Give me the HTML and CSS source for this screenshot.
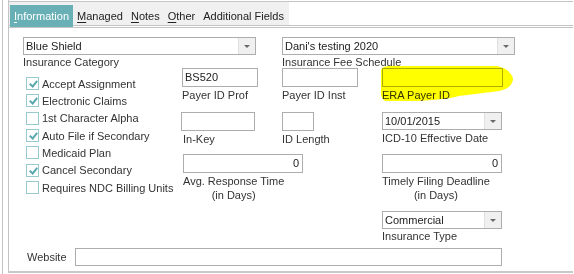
FILE: index.html
```html
<!DOCTYPE html>
<html>
<head>
	<meta name="viewport" content="width=device-width, initial-scale=1.0">
	<link rel="stylesheet" href="styles.css">
</head>
<body>
	<div class="frame">
		<div class="page">
			<!-- tab strip -->
			<div class="tabs">
				<div class="strip">
					<span class="tab active"><u>I</u>nformation</span>
					<span class="tab"><u>M</u>anaged</span>
					<span class="tab"><u>N</u>otes</span>
					<span class="tab"><u>O</u>ther</span>
					<span class="tab">Additional Fields</span>
				</div>
			</div>

			<div class="panel">
				<div class="form">
					<div class="field category">
						<div class="combo wide"><span class="value">Blue Shield</span><span class="drop"></span></div>
						<div class="label top">Insurance Category</div>
					</div>
					<div class="field schedule">
						<div class="combo wide"><span class="value">Dani's testing 2020</span><span class="drop"></span></div>
						<div class="label top">Insurance Fee Schedule</div>
					</div>

					<div class="checks">
						<label class="check"><span class="box on"></span>Accept Assignment</label>
						<label class="check"><span class="box on"></span>Electronic Claims</label>
						<label class="check"><span class="box"></span>1st Character Alpha</label>
						<label class="check"><span class="box on"></span>Auto File if Secondary</label>
						<label class="check"><span class="box"></span>Medicaid Plan</label>
						<label class="check"><span class="box on"></span>Cancel Secondary</label>
						<label class="check"><span class="box"></span>Requires NDC Billing Units</label>
					</div>

					<div class="field prof">
						<div class="input w76">BS520</div>
						<div class="label">Payer ID Prof</div>
					</div>
					<div class="field inst">
						<div class="input w76"></div>
						<div class="label">Payer ID Inst</div>
					</div>
					<div class="field era">
						<div class="input w121"></div>
						<div class="label">ERA Payer ID</div>
						<svg class="marker" width="140" height="42" viewBox="0 0 140 42">
							<path d="M2,6 Q3,1 20,2 L118,2 Q131,5 134,14 Q134,24 120,27 L80,32 Q62,37 24,37 L6,37 Q1,34 2,26 Z" fill="#ffff00"/>
						</svg>
					</div>

					<div class="field inkey">
						<div class="input w74"></div>
						<div class="label">In-Key</div>
					</div>
					<div class="field idlen">
						<div class="input w32"></div>
						<div class="label">ID Length</div>
					</div>
					<div class="field icd">
						<div class="combo w120"><span class="value">10/01/2015</span><span class="drop"></span></div>
						<div class="label">ICD-10 Effective Date</div>
					</div>

					<div class="field avg">
						<div class="input w120 num">0</div>
						<div class="label"><span class="two">Avg. Response Time<br>(in Days)</span></div>
					</div>
					<div class="field timely">
						<div class="input w120 num">0</div>
						<div class="label"><span class="two">Timely Filing Deadline<br>(in Days)</span></div>
					</div>

					<div class="field type">
						<div class="combo w120"><span class="value">Commercial</span><span class="drop"></span></div>
						<div class="label top">Insurance Type</div>
					</div>
				</div>

				<div class="website">
					<span class="site-label">Website</span>
					<div class="input site"></div>
				</div>
			</div>
		</div>
	</div>
</body>
</html>
```

FILE: styles.css
```css
:root {
	--line: #c4c4c4;
	--field-border: #adadad;
	--strip: #f0f0f0;
	--teal: #68b0b5;
	--check-border: #98c9cd;
	--check-mark: #5aa8ae;
	--text: #333;
}

body {
	margin: 0;
	background: #fff;
	color: var(--text);
	font-family: "Liberation Sans", Arial, sans-serif;
	font-size: 11px;
}

.frame {
	margin-left: 2px;
	padding-left: 5px;
	border-left: 1px solid var(--line);
	height: 274px;
	box-sizing: border-box;
}

.page {
	border-left: 1px solid var(--line);
	padding-top: 1px;
	margin-right: 1px;
}

/* tabs */
.tabs {
	border-top: 1px solid var(--line);
	border-bottom: 1px solid var(--line);
	height: 23px;
	display: flex;
}

.strip {
	background: var(--strip);
	display: flex;
	align-items: flex-end;
	padding-left: 1px;
	padding-right: 1px;
}

.tab {
	height: 22px;
	line-height: 22px;
	padding: 0 4px;
	margin-bottom: -2px;
	color: #222;
	font-size: 11px;
}

.tab u { text-decoration-thickness: 1px; text-underline-offset: 2px; }

.tab.active {
	background: var(--teal);
	color: #fff;
}

/* panel */
.panel {
	margin-top: 1px;
	border-top: 1px solid var(--line);
	border-bottom: 2px solid #c8c8c8;
	padding: 9px 0 5px 14px;
}

.form {
	display: grid;
	grid-template-columns: 159px 100px 100px 140px;
	grid-template-rows: 31px 44px 42px 57px 37px;
}

.field {
	display: flex;
	flex-direction: column;
	align-items: flex-start;
	position: relative;
}

.label {
	line-height: 14px;
	margin-top: 1px;
	white-space: nowrap;
}

.label.top { margin-top: 0; }

.label .two {
	display: inline-block;
	text-align: center;
}

.input, .combo {
	box-sizing: border-box;
	border: 1px solid var(--field-border);
	background: #fff;
	color: #222;
	height: 19px;
	line-height: 17px;
	padding: 0 2px;
	white-space: nowrap;
}

.input.num { text-align: right; padding-right: 3px; }

.combo {
	height: 18px;
	line-height: 16px;
	display: flex;
	padding: 0;
}

.combo .value {
	flex: 1;
	padding-left: 2px;
}

.combo .drop {
	width: 16px;
	background: var(--strip);
	border-left: 1px solid #e0e0e0;
	position: relative;
}

.combo .drop::after {
	content: "";
	position: absolute;
	left: 5px;
	top: 7px;
	border-left: 3px solid transparent;
	border-right: 3px solid transparent;
	border-top: 3px solid #6a6a6a;
}

.wide { width: 233px; }
.w120 { width: 120px; }
.w121 { width: 121px; }
.w76 { width: 76px; }
.w74 { width: 74px; }
.w32 { width: 32px; }

.category { grid-column: 1 / 3; grid-row: 1; }
.schedule { grid-column: 3 / 5; grid-row: 1; }
.prof { grid-column: 2; grid-row: 2; }
.inst { grid-column: 3; grid-row: 2; }
.era { grid-column: 4; grid-row: 2; }
.inkey { grid-column: 2; grid-row: 3; margin-left: -1px; }
.inkey .label { margin-left: 2px; }
.idlen { grid-column: 3; grid-row: 3; }
.icd { grid-column: 4; grid-row: 3; }
.avg { grid-column: 2 / 4; grid-row: 4; margin-left: 1px; }
.timely { grid-column: 4; grid-row: 4; }
.type { grid-column: 4; grid-row: 5; }

/* highlighter stroke over the ERA field */
.marker {
	position: absolute;
	left: -3px;
	top: -4px;
	mix-blend-mode: multiply;
	pointer-events: none;
}

/* checkboxes */
.checks {
	grid-column: 1;
	grid-row: 2 / 6;
	padding: 7px 0 0 3px;
}

.check {
	display: flex;
	align-items: center;
	height: 17.33px;
	white-space: nowrap;
}

.box {
	box-sizing: border-box;
	width: 13px;
	height: 13px;
	border: 1px solid var(--check-border);
	background: #fff;
	margin-right: 3px;
	position: relative;
}

.box.on::after {
	content: "";
	position: absolute;
	left: 4px;
	top: 1px;
	width: 3px;
	height: 6px;
	border-right: 2px solid var(--check-mark);
	border-bottom: 2px solid var(--check-mark);
	transform: rotate(40deg);
}

/* website row */
.website {
	display: flex;
	align-items: center;
}

.site-label {
	padding-left: 4px;
	width: 48px;
}

.input.site {
	width: 427px;
	height: 18px;
}
```
